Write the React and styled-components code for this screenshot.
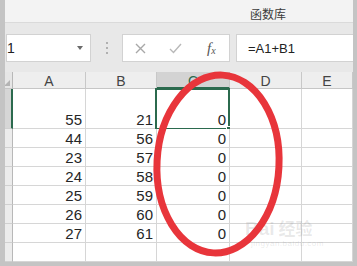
import React from "react";
import styled, { createGlobalStyle } from "styled-components";

const GlobalStyle = createGlobalStyle`
  html, body { margin: 0; padding: 0; }
  body { overflow: hidden; background: #fff; font-family: "Liberation Sans", Arial, sans-serif; }
`;

const Frame = styled.div`
  position: relative;
  width: 357px;
  height: 266px;
  box-sizing: border-box;
  border-left: 5px solid #c4c4c4;
  border-right: 4px solid #c4c4c4;
  border-bottom: 4px solid #c4c4c4;
  display: flex;
  flex-direction: column;
  overflow: hidden;
  background: #fff;
`;

const TopBand = styled.div`
  height: 23px;
  box-sizing: border-box;
  background: #f3f3f3;
  border-bottom: 1px solid #dadada;
  display: flex;
  align-items: center;
  padding: 4px 0 0 245px;
  font-family: "Noto Sans CJK SC", sans-serif;
  font-size: 12px;
  color: #3c3c3c;
`;

const FormulaRow = styled.div`
  height: 49px;
  box-sizing: border-box;
  background: #e8e8e8;
  display: flex;
  align-items: center;
  padding: 11px 0 10px 1px;
`;

const Box = styled.div`
  height: 28px;
  box-sizing: border-box;
  background: #fff;
  border: 1px solid #d2d2d2;
  display: flex;
  align-items: center;
`;

const NameBox = styled(Box)`
  width: 85px;
  justify-content: space-between;
  padding-right: 7px;
  font-size: 14px;
  color: #222;
`;

const Caret = styled.span`
  width: 0;
  height: 0;
  border-left: 3.5px solid transparent;
  border-right: 3.5px solid transparent;
  border-top: 4px solid #6a6a6a;
`;

const Dots = styled.div`
  margin: 0 14px 0 15px;
  display: flex;
  flex-direction: column;
  gap: 3px;
  span {
    width: 2px;
    height: 2px;
    background: #b0b0b0;
  }
`;

const FnBox = styled(Box)`
  width: 108px;
`;

const FnSlot = styled.div`
  width: 36px;
  display: flex;
  justify-content: center;
  align-items: center;
`;

const Fx = styled.span`
  font-family: "Liberation Serif", serif;
  font-style: italic;
  font-size: 15px;
  color: #555;
  sub {
    font-size: 10px;
    vertical-align: -1px;
  }
`;

const InputBox = styled(Box)`
  flex: 1;
  margin-left: 6px;
  border-right: none;
  padding-left: 11px;
  font-size: 13px;
  color: #222;
`;

const Grid = styled.div`
  display: grid;
  grid-template-columns: 8px 73px 71px 73px 72px 1fr;
  grid-template-rows: 17px 40px repeat(7, 19px);
  flex: 1;
`;

const ColHead = styled.div`
  box-sizing: border-box;
  background: ${(p) => (p.$sel ? "#d3d3d3" : "#eeeeee")};
  border-right: 1px solid #c8c8c8;
  border-bottom: ${(p) => (p.$sel ? "2px solid #2b6a4e" : "1px solid #c6c6c6")};
  display: flex;
  justify-content: center;
  align-items: center;
  padding-top: 2px;
  font-size: 14px;
  color: ${(p) => (p.$sel ? "#2b6a4e" : "#444")};
`;

const Corner = styled.div`
  box-sizing: border-box;
  background: #e6e6e6;
  border-right: 1px solid #b8b8b8;
  border-bottom: 1px solid #c6c6c6;
  display: flex;
  align-items: flex-end;
  justify-content: flex-end;
  padding: 0 2px 2px 0;
  &::after {
    content: "";
    width: 0;
    height: 0;
    border-left: 6px solid transparent;
    border-bottom: 6px solid #b4b4b4;
  }
`;

const RowHead = styled.div`
  box-sizing: border-box;
  background: ${(p) => (p.$sel ? "#d6d6d6" : "#ececec")};
  border-right: ${(p) => (p.$sel ? "2px solid #2b6a4e" : "1px solid #b8b8b8")};
  border-bottom: 1px solid #d0d0d0;
`;

const Cell = styled.div`
  position: relative;
  box-sizing: border-box;
  background: #fff;
  border-right: 1px solid #d6d6d6;
  border-bottom: 1px solid #d6d6d6;
  display: flex;
  justify-content: flex-end;
  align-items: flex-end;
  padding: 0 3px 1px 0;
  font-size: 15px;
  line-height: 14px;
  color: #262626;
  ${(p) =>
    p.$sel &&
    `
    &::before {
      content: "";
      position: absolute;
      left: -2px;
      top: -1px;
      right: -1px;
      bottom: -2px;
      border: 2px solid #2b6a4e;
      pointer-events: none;
    }
    &::after {
      content: "";
      position: absolute;
      right: -4px;
      bottom: -5px;
      width: 5px;
      height: 5px;
      background: #2b6a4e;
      border: 1px solid #fff;
    }
  `}
`;

const Overlay = styled.svg`
  position: absolute;
  left: -5px;
  top: 0;
  width: 357px;
  height: 266px;
  pointer-events: none;
`;

const Watermark = styled.div`
  position: absolute;
  left: 240px;
  top: 218px;
  display: flex;
  flex-direction: column;
  align-items: flex-start;
  color: rgba(120, 120, 120, 0.16);
  pointer-events: none;
`;

const WmMain = styled.div`
  font-family: "Liberation Sans", sans-serif;
  font-weight: bold;
  font-size: 19px;
  line-height: 20px;
  span {
    font-family: "Noto Sans CJK SC", sans-serif;
    font-size: 17px;
    margin-left: 4px;
  }
`;

const WmSub = styled.div`
  font-size: 8px;
  margin-left: 6px;
  letter-spacing: 0.5px;
`;

const cols = ["A", "B", "C", "D", "E"];
const data = [
  [55, 21],
  [44, 56],
  [23, 57],
  [24, 58],
  [25, 59],
  [26, 60],
  [27, 61],
];

const XIcon = () => (
  <svg width="11" height="11" viewBox="0 0 11 11">
    <path d="M1 1L10 10M10 1L1 10" stroke="#a8a8a8" strokeWidth="1.4" />
  </svg>
);

const CheckIcon = () => (
  <svg width="13" height="11" viewBox="0 0 13 11">
    <path d="M1 6L4.5 9.5L12 1" stroke="#b8b8b8" strokeWidth="1.4" fill="none" />
  </svg>
);

export default function App() {
  const rows = [];
  rows.push(
    <RowHead key="h1" $sel />,
    <Cell key="a1">55</Cell>,
    <Cell key="b1">21</Cell>,
    <Cell key="c1" $sel>0</Cell>,
    <Cell key="d1" />,
    <Cell key="e1" />
  );
  data.slice(1).forEach((r, i) => {
    rows.push(
      <RowHead key={`h${i + 2}`} />,
      <Cell key={`a${i + 2}`}>{r[0]}</Cell>,
      <Cell key={`b${i + 2}`}>{r[1]}</Cell>,
      <Cell key={`c${i + 2}`}>0</Cell>,
      <Cell key={`d${i + 2}`} />,
      <Cell key={`e${i + 2}`} />
    );
  });
  rows.push(
    <RowHead key="h9" />,
    <Cell key="a9" />,
    <Cell key="b9" />,
    <Cell key="c9" />,
    <Cell key="d9" />,
    <Cell key="e9" />
  );

  return (
    <>
      <GlobalStyle />
      <Frame>
        <TopBand>函数库</TopBand>
        <FormulaRow>
          <NameBox>
            1
            <Caret />
          </NameBox>
          <Dots>
            <span />
            <span />
            <span />
          </Dots>
          <FnBox>
            <FnSlot>
              <XIcon />
            </FnSlot>
            <FnSlot>
              <CheckIcon />
            </FnSlot>
            <FnSlot>
              <Fx>
                f<sub>x</sub>
              </Fx>
            </FnSlot>
          </FnBox>
          <InputBox>=A1+B1</InputBox>
        </FormulaRow>
        <Grid>
          <Corner />
          {cols.map((c) => (
            <ColHead key={c} $sel={c === "C"}>
              {c}
            </ColHead>
          ))}
          {rows}
        </Grid>
        <Watermark>
          <WmMain>
            Bai<span>经验</span>
          </WmMain>
          <WmSub>jingyan.baidu.com</WmSub>
        </Watermark>
        <Overlay viewBox="0 0 357 266">
          <ellipse
            cx="218"
            cy="164"
            rx="61"
            ry="89"
            transform="rotate(3 218 164)"
            fill="none"
            stroke="#e8353b"
            strokeWidth="7"
          />
        </Overlay>
      </Frame>
    </>
  );
}
